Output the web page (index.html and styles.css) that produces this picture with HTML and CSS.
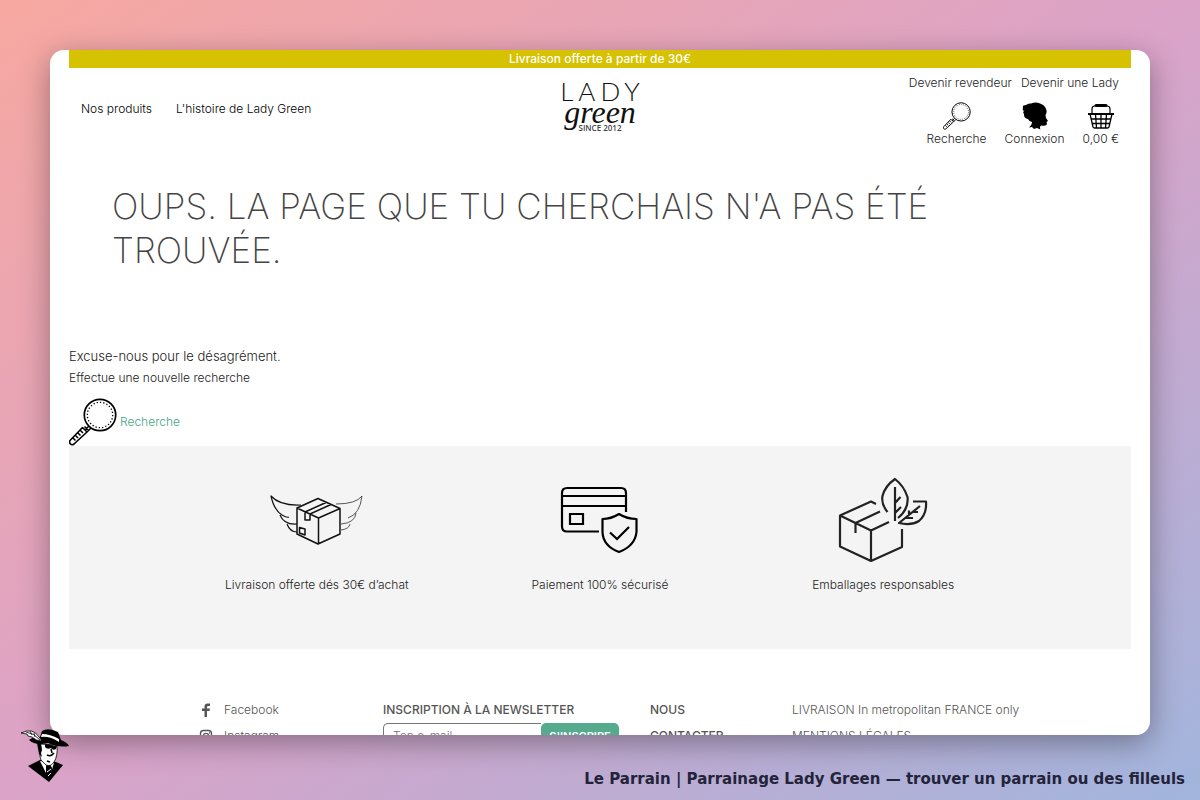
FILE: index.html
```html
<!DOCTYPE html>
<html lang="fr">
<head>
<meta charset="utf-8">
<meta name="viewport" content="width=device-width, initial-scale=1">
<title>Le Parrain | Parrainage Lady Green</title>
<link rel="stylesheet" href="styles.css">
</head>
<body>

<svg class="defs" width="0" height="0" aria-hidden="true">
  <symbol id="loupe" viewBox="0 0 48 48">
    <g fill="none" stroke="#000">
      <circle cx="31" cy="17" r="15.7" stroke-width="1.700"/>
      <circle cx="31" cy="17" r="12.7" stroke-width="1.300" stroke-dasharray="1.300 2"/>
      <path stroke-width="1.600" stroke-linejoin="round" d="M20 28L16 32M22 30L18 34M13.500 29.500L1 42.500Q0 44.500 1.500 46T5 46L18 34ZM15.500 28.500L19.500 32.500M4 40l2.500 2.500M6.500 37.500l2.500 2.500M9 35l2.500 2.500M11.500 32.500l2.500 2.500"/>
    </g>
  </symbol>
</svg>

<main class="window">
  <p class="topbar">Livraison offerte à partir de 30€</p>

  <header class="header">
    <nav class="nav">
      <a href="#">Nos produits</a>
      <a href="#">L'histoire de Lady Green</a>
    </nav>
    <a class="logo" href="#">
      <span class="logo-lady">LADY</span>
      <span class="logo-green">green</span>
      <span class="logo-since">SINCE 2012</span>
    </a>
    <div class="account">
      <nav class="account-links">
        <a href="#">Devenir revendeur</a>
        <a href="#">Devenir une Lady</a>
      </nav>
      <div class="tools">
        <a href="#">
          <svg width="28" height="28"><use href="#loupe"/></svg>
          Recherche
        </a>
        <a href="#">
          <svg width="28" height="28" viewBox="0 0 28 28">
            <path d="M5 3Q7 1 10 1.500Q15-.5 19 1.500Q24 3 25 7Q26.500 10 24.500 13L25 16L27 19L25.500 20L26 22Q25.500 24.500 20.500 23.500Q18 24.500 19.500 27.500L16 26L13 27L11 25L8 25.500Q11.500 22 11 20Q8 19.500 7 17Q2.500 16 3 12Q1.500 10.500 3 9Q1 8 2 6Q1 3 5 3Z"/>
          </svg>
          Connexion
        </a>
        <a href="#">
          <svg width="28" height="28" viewBox="0 0 28 28" fill="none" stroke="#000">
            <path stroke-width="1.200" d="M5 12V7Q5 4 8 4M20 4Q23 4 23 7V12"/>
            <path stroke-width="3" stroke-linecap="round" d="M9 3.500h10"/>
            <path stroke-width="2" d="M1 12h26"/>
            <path stroke-width="1.300" d="M3 12l3 13q.5 1 1.500 1h13q1 0 1.500-1l3-13M4 17h20M5 21.500h18M8.500 12l1 14M14 12v14M19.500 12l-1 14"/>
          </svg>
          0,00 €
        </a>
      </div>
    </div>
  </header>

  <h1>Oups. La page que tu cherchais n'a pas été trouvée.</h1>

  <section class="sorry">
    <p class="sorry-lead">Excuse-nous pour le désagrément.</p>
    <p>Effectue une nouvelle recherche</p>
    <a class="sorry-search" href="#">
      <svg width="48" height="48"><use href="#loupe"/></svg>
      Recherche
    </a>
  </section>

  <section class="perks">
    <div class="perk">
      <svg width="100" height="100" viewBox="0 0 100 100" fill="none" stroke="#111" stroke-linejoin="round">
        <path stroke-width="1.200" d="M34 35Q13 36 4 26Q7 40 15 45Q20 48 22 47M13 45Q17 55 30 54M20 54Q23 62 30 62"/>
        <path stroke-width=".9" stroke="#444" d="M69 34Q89 34 95 26Q93 44 81 48M89 43Q88 53 74 54M83 54Q82 59 74 60"/>
        <path stroke-width="1.500" d="M30 38L51 28.500L73 38.500V64L51 74L30 64ZM30 38L51.500 48L73 38.500M51.500 48V74M38 42L59 32.500M43 45V50H38V41M43 44L64 34.500M32.500 57.500L38 59V65L32.500 63Z"/>
      </svg>
      <p>Livraison offerte dés 30€ d’achat</p>
    </div>
    <div class="perk">
      <svg width="100" height="100" viewBox="0 0 100 100" fill="none" stroke="#000" stroke-width="2.200">
        <path d="M49 61.500H17Q12 61.500 12 56.500V23Q12 18 17 18H71Q76 18 76 23V42M12 26H76M12 36H76M20 44H33V54H20Z"/>
        <path stroke-linejoin="round" d="M69 44Q61 49 52.500 49V62Q53 76 69 82Q85 76 86.500 62V49Q77 49 69 44Z"/>
        <path d="M60 62.500L67 69L79 57"/>
      </svg>
      <p>Paiement 100% sécurisé</p>
    </div>
    <div class="perk">
      <svg width="100" height="100" viewBox="0 0 100 100" fill="none" stroke="#222" stroke-width="2.200" stroke-linejoin="round">
        <path d="M43 34L38 31.500L7 45.500V76.500L38 91L69 77V59M7 45.500L38 60.500L56 52M38 60.500V91M22.500 63V53L47 41.500"/>
        <path d="M54.500 42Q48 34 49.500 26Q52 16 62 9Q71 16 74.500 27Q76 39 65 48M62 51V17M62 33L67.500 27M62 43L68 37"/>
        <path d="M80 31.500H93Q94 44 86 51Q78 56 66 53L87 36M76 45V40.500M72 48H80M80 42H85"/>
      </svg>
      <p>Emballages responsables</p>
    </div>
  </section>

  <footer class="footer">
    <ul class="social">
      <li><a href="#">
        <svg width="14" height="14" viewBox="0 0 14 14"><path fill="#555" d="M5.500 14V8H3V5.500h2.500V3.500Q5.500.5 8.500.5H11V3H9.500Q8 3 8 4v1.500h3L10.500 8H8v6Z"/></svg>
        Facebook
      </a></li>
      <li><a href="#">
        <svg width="14" height="14" viewBox="0 0 14 14" fill="none" stroke="#555" stroke-width="1.400"><rect x="1.500" y="1.500" width="11" height="11" rx="3"/><circle cx="7" cy="7" r="2.600"/><path d="M10 4h1"/></svg>
        Instagram
      </a></li>
    </ul>
    <form class="newsletter">
      <label for="email">INSCRIPTION À LA NEWSLETTER</label>
      <div class="newsletter-field">
        <input id="email" type="email" placeholder="Ton e-mail">
        <button type="button">S'INSCRIRE</button>
      </div>
    </form>
    <ul class="contact">
      <li><a href="#">NOUS</a></li>
      <li><a href="#">CONTACTER</a></li>
    </ul>
    <ul>
      <li><a href="#">LIVRAISON In metropolitan FRANCE only</a></li>
      <li><a href="#">MENTIONS LÉGALES</a></li>
    </ul>
  </footer>
</main>

<svg class="mascot" width="52" height="56" viewBox="0 0 52 56">
  <path fill="#000" d="M8 38L20 32L36 34L43 37L29 54Z"/>
  <path fill="#fff" d="M20 33L34 35L29 51Z"/>
  <path fill="#000" d="M26 37l4-1 2 4-1 10-2 2-3-6Z"/>
  <path stroke="#fff" d="M27 44l4-3M28 48l3-3"/>
  <path fill="#fff" stroke="#000" stroke-width=".8" d="M20 16Q19 27 21 32L26 37Q31 39 34 34Q38 28 37 17Z"/>
  <path fill="#000" d="M17 15h4l1 7-1 3 1 4-3-3Z"/>
  <path fill="#000" d="M25 16L37 18L36 21Q33 23 31 20Q27 22 25 19Z"/>
  <path fill="none" stroke="#000" stroke-width="1.500" d="M27 27Q31 29 34 25M27 33l3 1M31 21l1 4"/>
  <path fill="#000" d="M9 12Q12 9 20 9L22 3Q28-1 38 4L41 12Q48 15 49 18Q39 20 28 15Q15 18 9 12Z"/>
  <path fill="#fff" d="M21 9Q30 8 39 14V11Q30 6 22 6Z"/>
  <path fill="#fff" stroke="#000" stroke-width=".8" d="M1 5Q13-1 19 9L22 13Q16 13 12 9L8 8L7 6Z"/>
  <path fill="none" stroke="#000" stroke-width=".8" d="M6 4Q14 5 20 12M10 3l2 4M14 5l1 4"/>
</svg>
<p class="caption">Le Parrain | Parrainage Lady Green — trouver un parrain ou des filleuls</p>

</body>
</html>
```
FILE: styles.css
```css
* {
  box-sizing: border-box;
}

body {
  margin: 0;
  height: 100vh;
  padding: 50px 50px 0;
  overflow: hidden;
  display: flex;
  flex-direction: column;
  position: relative;
  font: 300 12px/18px Inter, sans-serif;
  color: #222;
  background: linear-gradient(to bottom right, #f7a8a0 0%, #dba3c8 50%, #a1b5dd 100%);
}

h1, p, ul {
  margin: 0;
  padding: 0;
  font-weight: inherit;
}

ul {
  list-style: none;
}

a {
  color: inherit;
  text-decoration: none;
}

.defs {
  position: absolute;
}

.window {
  flex: 1;
  min-height: 0;
  overflow: hidden;
  padding: 0 19px;
  background: #fff;
  border-radius: 14px;
}

body::before {
  content: "";
  position: absolute;
  inset: 50px 50px 65px;
  z-index: -1;
  border-radius: 14px;
  box-shadow: 0 8px 30px rgba(0, 0, 0, .35);
}

.topbar {
  background: #d6c200;
  color: #fff;
  font-weight: 500;
  text-align: center;
}

/* header */

.header {
  display: grid;
  grid-template-columns: 1fr auto 1fr;
  height: 98px;
  padding: 6px 12px 0;
}

.nav {
  display: flex;
  gap: 24px;
  padding-top: 26px;
  color: #000;
}

.logo {
  display: flex;
  flex-direction: column;
  align-items: center;
  padding-top: 5px;
  color: #111;
}

.logo-lady {
  font-family: Lato, sans-serif;
  font-size: 26px;
  line-height: 24px;
  letter-spacing: 5px;
  margin-right: -5px;
}

.logo-green {
  font: italic 400 32px/18px "Z003", "URW Chancery L", cursive;
}

.logo-since {
  font: 600 8px/14px "Open Sans", sans-serif;
  color: #444;
}

.account {
  display: flex;
  flex-direction: column;
  align-items: flex-end;
}

.account-links {
  display: flex;
  gap: 9px;
}

.tools {
  display: flex;
  gap: 18px;
  padding-top: 10px;
}

.tools a {
  display: flex;
  flex-direction: column;
  align-items: center;
}

/* not found */

h1 {
  padding: 18px 120px 0 43px;
  font-size: 35px;
  line-height: 44px;
  font-weight: 200;
  text-transform: uppercase;
  color: #444;
}

.sorry {
  padding-top: 73px;
}

.sorry p {
  line-height: 22px;
}

.sorry .sorry-lead {
  font-size: 13px;
}

.sorry-search {
  display: flex;
  align-items: center;
  gap: 3px;
  padding-top: 9px;
  color: #44a584;
}

/* reassurance band */

.perks {
  display: grid;
  grid-template-columns: repeat(3, 1fr);
  height: 203px;
  padding: 24px 10% 0;
  background: #f4f4f4;
}

.perk {
  text-align: center;
}

.perk svg {
  display: block;
  margin: 0 auto 6px;
}

/* footer */

.footer {
  display: grid;
  grid-template-columns: 184px 267px 142px 1fr;
  padding: 48px 0 0 130px;
  line-height: 26px;
  color: #555;
}

.social a {
  display: flex;
  align-items: center;
  gap: 11px;
}

.newsletter label,
.contact {
  font-weight: 500;
}

.newsletter label {
  display: block;
}

.newsletter-field {
  display: flex;
  width: 236px;
}

.newsletter input {
  flex: 1;
  min-width: 0;
  height: 26px;
  padding: 0 9px;
  font: inherit;
  border: 1px solid #777;
  border-right: 0;
  border-radius: 5px 0 0 5px;
}

.newsletter button {
  width: 78px;
  padding: 0;
  border: 0;
  border-radius: 5px;
  background: #56ab8f;
  color: #fff;
  font: 600 11px/26px Inter, sans-serif;
}

/* below the window */

.mascot {
  position: absolute;
  left: 20px;
  bottom: 16px;
}

.caption {
  height: 65px;
  margin-right: -35px;
  padding-top: 35px;
  text-align: right;
  font: 700 15px/18px "DejaVu Sans", sans-serif;
  color: #23233a;
}
```
